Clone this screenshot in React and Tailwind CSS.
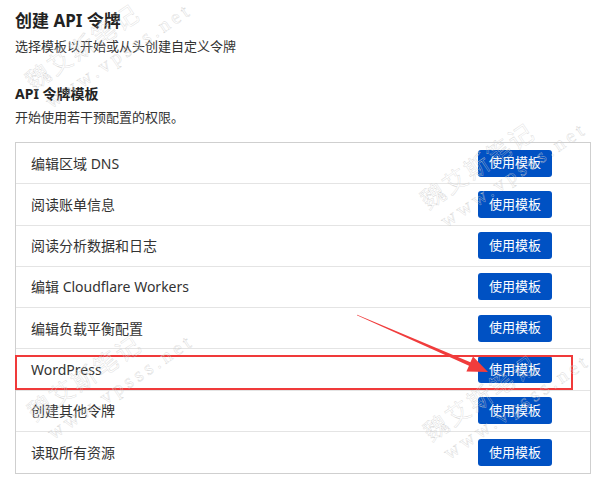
import React from 'react'

const templates = [
  '编辑区域 DNS',
  '阅读账单信息',
  '阅读分析数据和日志',
  '编辑 Cloudflare Workers',
  '编辑负载平衡配置',
  'WordPress',
  '创建其他令牌',
  '读取所有资源',
]

// faint diagonal site watermark printed over the screenshot
function Watermark({ className }) {
  return (
    <div
      aria-hidden="true"
      className={
        'pointer-events-none absolute flex -translate-x-1/2 -translate-y-1/2 -rotate-[34deg] flex-col items-start text-transparent [-webkit-text-stroke:0.3px_#cdcdcd] ' +
        className
      }
    >
      <span className="text-[24px] leading-[28px] tracking-[0.1em] font-['Noto_Sans_CJK_SC',serif]">魏艾斯笔记</span>
      <span className="ml-[5px] mt-[2px] text-[20px] leading-[24px] tracking-[0.2em] font-['Liberation_Serif',serif]">
        www.vpsss.net
      </span>
    </div>
  )
}

export default function App() {
  return (
    <div className="relative w-[600px] h-[486px] overflow-hidden bg-white font-['Noto_Sans','Noto_Sans_CJK_SC',sans-serif] text-[#333]">
      <div className="px-[15px] pt-[10px]">
        <h1 className="text-[17px] leading-[22px] font-bold text-[#222]">创建 API 令牌</h1>
        <p className="mt-[4px] text-[13px] leading-[20px]">选择模板以开始或从头创建自定义令牌</p>

        <h2 className="mt-[28px] text-[14px] leading-[20px] font-bold text-[#222]">API 令牌模板</h2>
        <p className="mt-[3px] text-[13px] leading-[20px]">开始使用若干预配置的权限。</p>

        <div className="mt-[15px] w-[576px] border border-[#cfcfcf]">
          {templates.map((name, i) => (
            <div
              key={name}
              className={
                'flex h-[41.25px] items-center justify-between pl-[15px] pr-[38px] ' +
                (i < templates.length - 1 ? 'border-b border-[#e4e4e4]' : '')
              }
            >
              <span className="text-[14px]">{name}</span>
              <button className="h-[27px] w-[74px] rounded-[3px] bg-[#0051c3] text-[13px] text-white">
                使用模板
              </button>
            </div>
          ))}
        </div>
      </div>

      {/* highlight box around WordPress */}
      <div className="pointer-events-none absolute left-[15px] top-[355px] h-[35px] w-[558px] border-2 border-[#f03a3a]" />

      <svg className="pointer-events-none absolute left-0 top-0" width="600" height="486">
        <polygon
          points="357.16,314.63 470.4,362.35 473,356.6 488,372 466.4,371.4 469,365.65 356.84,315.37"
          fill="#f03c3c"
        />
      </svg>

      <Watermark className="left-[108px] top-[44px]" />
      <Watermark className="left-[503px] top-[163px]" />
      <Watermark className="left-[110px] top-[375px]" />
      <Watermark className="left-[506px] top-[395px]" />
    </div>
  )
}
